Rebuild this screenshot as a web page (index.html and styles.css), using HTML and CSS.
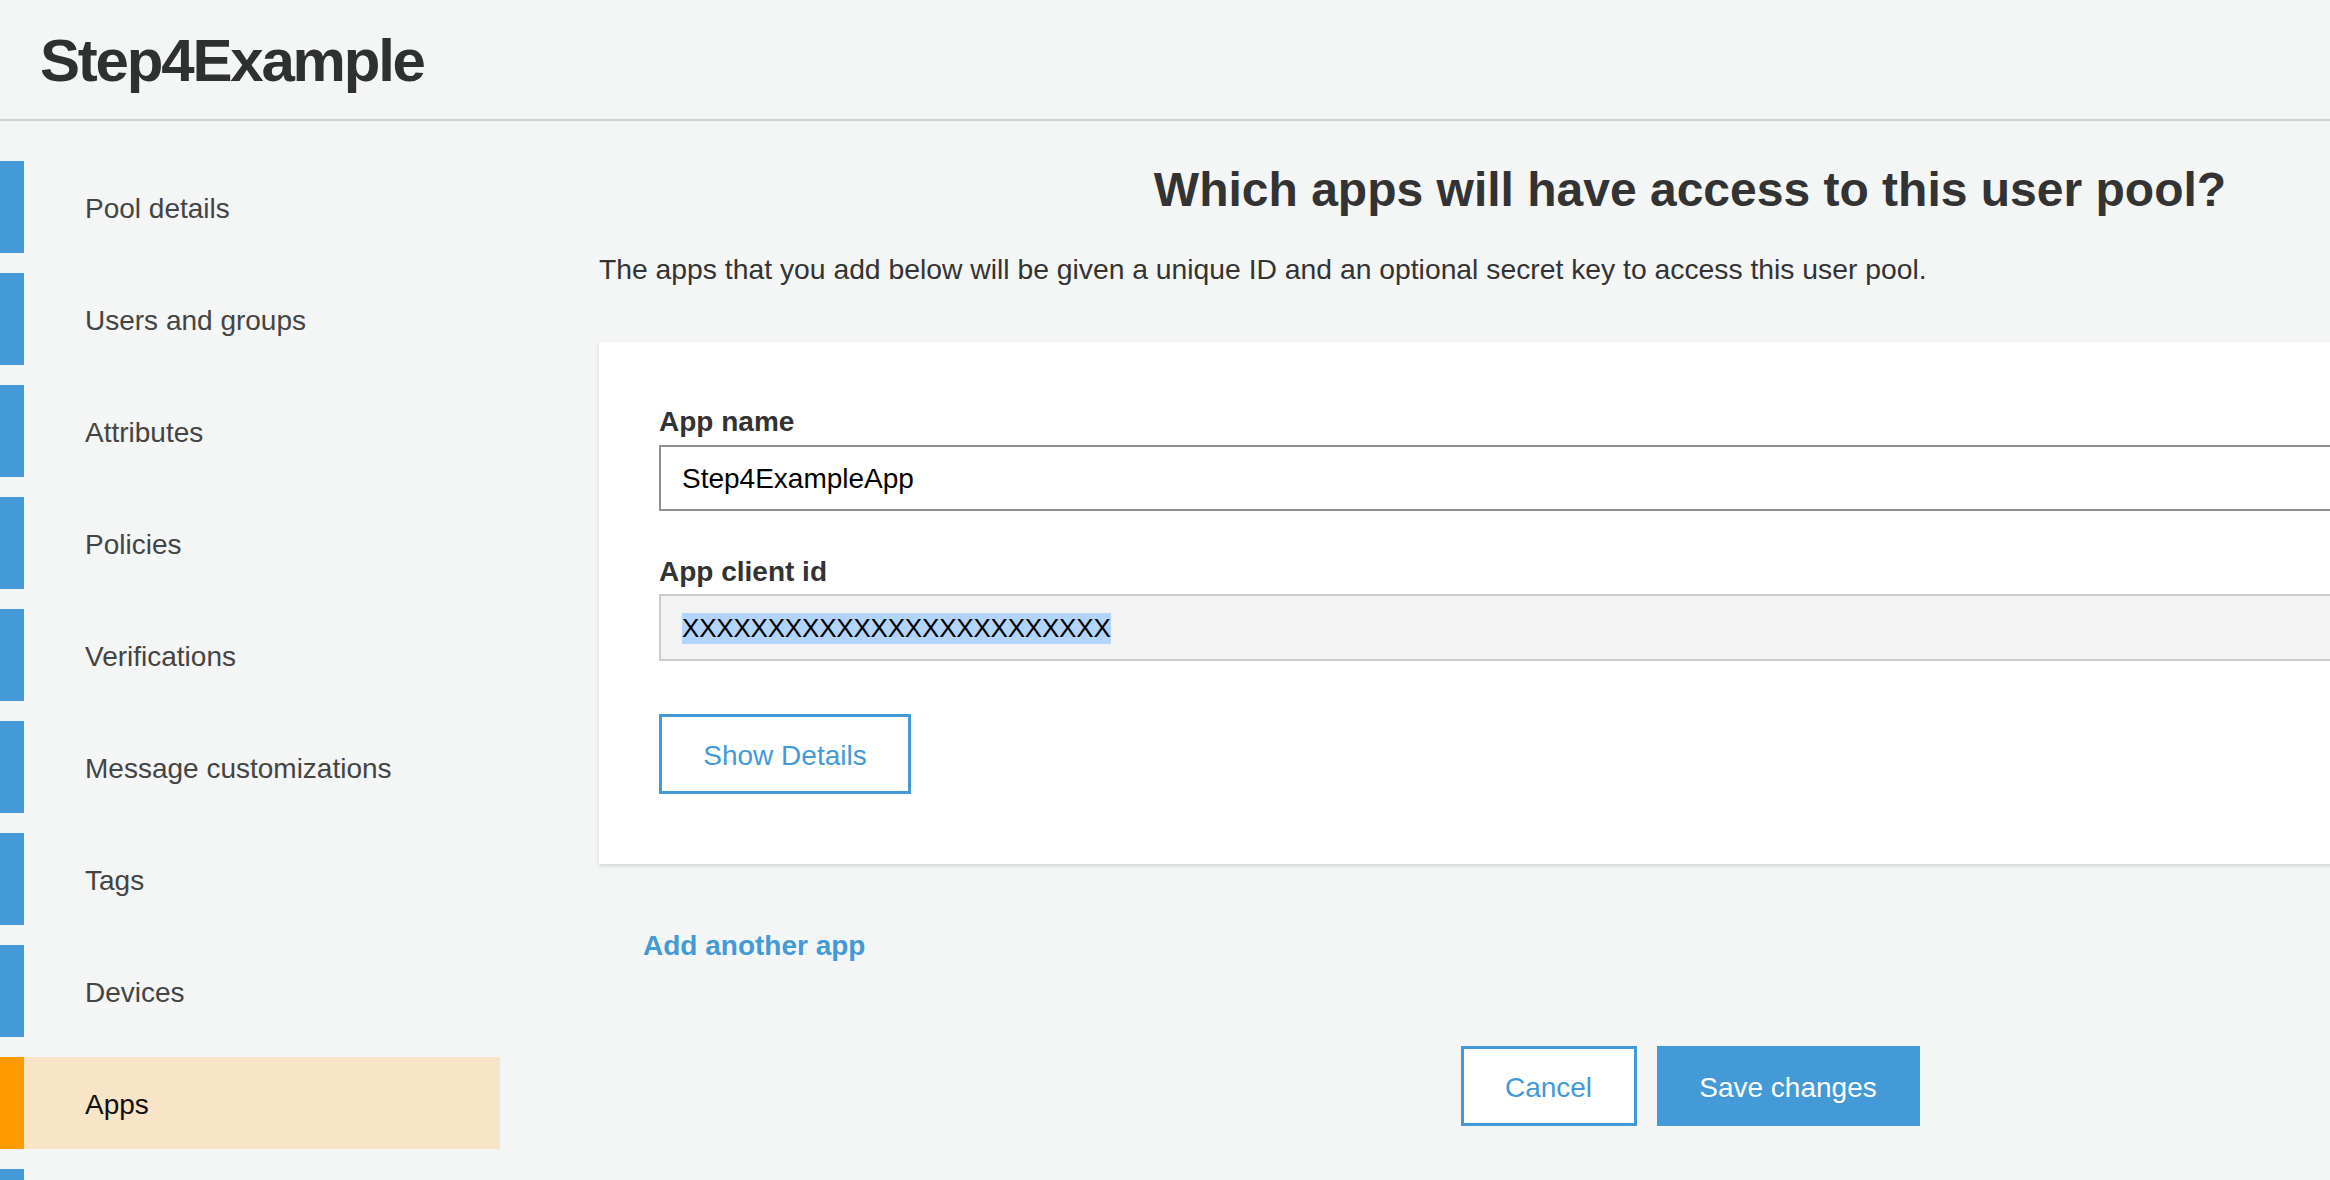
FILE: index.html
```html
<!DOCTYPE html>
<html lang="en">
<head>
<meta charset="utf-8">
<title>Step4Example</title>
<link rel="stylesheet" href="styles.css">
</head>
<body>
<header class="page-header">
  <h1 class="page-title">Step4Example</h1>
</header>
<div class="layout">
  <nav class="sidebar">
    <div class="nav-item">Pool details</div>
    <div class="nav-item">Users and groups</div>
    <div class="nav-item">Attributes</div>
    <div class="nav-item">Policies</div>
    <div class="nav-item">Verifications</div>
    <div class="nav-item">Message customizations</div>
    <div class="nav-item">Tags</div>
    <div class="nav-item">Devices</div>
    <div class="nav-item active">Apps</div>
    <div class="nav-item" aria-hidden="true"></div>
  </nav>
  <main class="main">
    <h2 class="heading">Which apps will have access to this user pool?</h2>
    <p class="subtitle">The apps that you add below will be given a unique ID and an optional secret key to access this user pool.</p>
    <section class="card">
      <div class="field-label">App name</div>
      <div class="field-input">Step4ExampleApp</div>
      <div class="field-label second">App client id</div>
      <div class="field-input readonly"><span class="selected">XXXXXXXXXXXXXXXXXXXXXXXXX</span></div>
      <button class="btn btn-outline show-details">Show Details</button>
    </section>
    <a class="add-link">Add another app</a>
    <div class="actions">
      <button class="btn btn-outline cancel">Cancel</button>
      <button class="btn btn-primary save">Save changes</button>
    </div>
  </main>
</div>
</body>
</html>
```
FILE: styles.css
```css
html, body {
  margin: 0;
  padding: 0;
  overflow: hidden;
}
body {
  width: 2330px;
  height: 1180px;
  background: #f4f5f5;
  font-family: "Liberation Sans", Arial, Helvetica, sans-serif;
  color: #333;
}
.page-header {
  height: 121px;
  box-sizing: border-box;
  padding: 31px 0 0 40px;
  border-bottom: 2px solid #d0d2d2;
}
.page-title {
  margin: 0;
  font-size: 60px;
  line-height: 60px;
  font-weight: bold;
  letter-spacing: -2.2px;
  color: #2f3030;
}
.layout {
  display: flex;
  align-items: flex-start;
}
.sidebar {
  width: 500px;
  flex-shrink: 0;
  padding-top: 40px;
  display: flex;
  flex-direction: column;
  gap: 20px;
}
.nav-item {
  height: 92px;
  display: flex;
  align-items: center;
  box-sizing: border-box;
  border-left: 24px solid #439ad6;
  padding-left: 61px;
  padding-top: 3px;
  font-size: 28px;
  color: #444;
}
.nav-item.active {
  border-left-color: #ff9900;
  background: #f8e4c6;
  color: #111;
}
.main {
  margin-left: 99px;
  width: 2182px;
  flex-shrink: 0;
}
.heading {
  margin: 45px 0 0;
  text-align: center;
  font-size: 48px;
  line-height: 48px;
  font-weight: bold;
  color: #333;
}
.subtitle {
  margin: 41px 0 0;
  font-size: 28.3px;
  line-height: 28px;
  color: #333;
}
.card {
  margin-top: 59px;
  background: #fff;
  padding: 66px 60px 70px 60px;
  box-shadow: 0 2px 4px rgba(0, 0, 0, 0.13);
}
.field-label {
  font-size: 28px;
  line-height: 28px;
  font-weight: bold;
  color: #333;
}
.field-label.second {
  margin-top: 47px;
}
.field-input {
  margin-top: 9px;
  height: 66px;
  box-sizing: border-box;
  border: 2px solid #8c9195;
  padding-left: 21px;
  padding-top: 2px;
  display: flex;
  align-items: center;
  font-size: 28px;
  color: #000;
  background: #fff;
}
.field-input.readonly {
  margin-top: 8px;
  height: 67px;
  font-size: 26px;
  background: #f3f3f3;
  border-color: #cccccc;
}
.selected {
  background: #b3d4fc;
  letter-spacing: -0.2px;
}
.btn {
  font-family: "Liberation Sans", Arial, Helvetica, sans-serif;
  font-size: 28px;
  height: 80px;
  box-sizing: border-box;
  border: 3px solid #439ad6;
  cursor: pointer;
  padding: 4px 0 0;
}
.btn-outline {
  background: #fff;
  color: #439ad6;
}
.btn-primary {
  background: #439ad6;
  color: #fff;
}
.show-details {
  display: block;
  margin-top: 53px;
  width: 252px;
}
.add-link {
  display: block;
  margin: 68px 0 0 44px;
  font-size: 28px;
  line-height: 28px;
  font-weight: bold;
  color: #439ad6;
}
.actions {
  margin-top: 86px;
  display: flex;
  justify-content: center;
  gap: 20px;
}
.cancel {
  width: 176px;
}
.save {
  width: 263px;
}
```
